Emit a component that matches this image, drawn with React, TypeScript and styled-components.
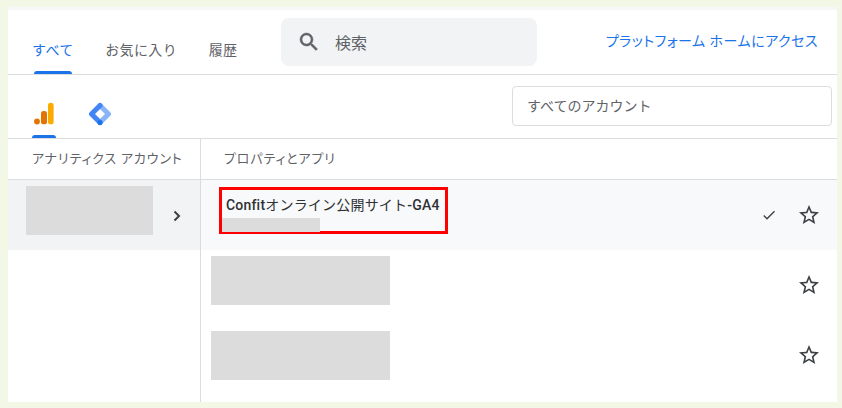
import React from 'react'
import styled, { createGlobalStyle } from 'styled-components'

const GlobalStyle = createGlobalStyle`
  html, body {
    margin: 0;
    padding: 0;
    height: 100%;
    background: #f3f7e5;
  }
  body {
    font-family: Roboto, "Noto Sans CJK JP", sans-serif;
    color: #3c4043;
  }
`

const Page = styled.div`
  width: 842px;
  height: 408px;
  padding: 7px 5px 6px 8px;
  box-sizing: border-box;
  overflow: hidden;
`

const Panel = styled.div`
  height: 395px;
  background: #fff;
  border-top: 3px solid #f7f7f7;
  box-sizing: border-box;
  display: flex;
  flex-direction: column;
`

const TopBar = styled.div`
  height: 64px;
  flex: none;
  display: flex;
  align-items: flex-start;
  border-bottom: 1px solid #dadce0;
  box-sizing: content-box;
`

const Tabs = styled.div`
  display: flex;
  width: 273px;
  padding-left: 24px;
  gap: 31.5px;
  box-sizing: border-box;
  flex: none;
`

const Tab = styled.div<{ $active?: boolean }>`
  position: relative;
  height: 64px;
  padding-top: 30px;
  box-sizing: border-box;
  font-size: 14px;
  line-height: 20px;
  letter-spacing: 0.4px;
  color: ${({ $active }) => ($active ? '#1a73e8' : '#5f6368')};
  ${({ $active }) =>
    $active &&
    `
    &::after {
      content: '';
      position: absolute;
      left: 2px;
      right: 2px;
      bottom: 0;
      height: 3px;
      background: #1a73e8;
      border-radius: 3px 3px 0 0;
    }
  `}
`

const SearchBox = styled.div`
  width: 256px;
  height: 48px;
  margin-top: 8px;
  flex: none;
  border-radius: 8px;
  background: #f1f3f4;
  display: flex;
  align-items: center;
  padding-left: 16px;
  box-sizing: border-box;
  gap: 14px;
  font-size: 16px;
  color: #5f6368;
`

const HomeLink = styled.a`
  margin-left: auto;
  margin-right: 19px;
  margin-top: 21px;
  font-size: 14px;
  line-height: 20px;
  font-feature-settings: "palt";
  letter-spacing: 0.5px;
  color: #1a73e8;
`

const ProductBar = styled.div`
  height: 63px;
  flex: none;
  display: flex;
  align-items: flex-start;
  border-bottom: 1px solid #dadce0;
`

const ProductTab = styled.div<{ $active?: boolean; $width: number }>`
  position: relative;
  width: ${({ $width }) => $width}px;
  height: 63px;
  display: flex;
  padding-top: 27px;
  box-sizing: border-box;
  justify-content: center;
  ${({ $active }) =>
    $active &&
    `
    &::after {
      content: '';
      position: absolute;
      left: 0;
      right: 0;
      bottom: 0;
      height: 3px;
      background: #1a73e8;
      border-radius: 3px 3px 0 0;
    }
  `}
`

const ProductTabs = styled.div`
  display: flex;
  gap: 32px;
  padding-left: 24px;
`

const AccountSelect = styled.div`
  margin: 11px 5px 0 auto;
  width: 320px;
  height: 40px;
  border: 1px solid #dadce0;
  border-radius: 4px;
  box-sizing: border-box;
  padding: 0 0 2px 14px;
  display: flex;
  align-items: center;
  font-size: 14px;
  color: #5f6368;
`

const Columns = styled.div`
  flex: 1;
  display: grid;
  grid-template-columns: 193px 1fr;
  min-height: 0;
`

const Column = styled.div<{ $divider?: boolean }>`
  display: flex;
  flex-direction: column;
  ${({ $divider }) => $divider && 'border-right: 1px solid #dadce0;'}
`

const ColumnHead = styled.div<{ $indent: number }>`
  height: 41px;
  flex: none;
  border-bottom: 1px solid #dadce0;
  padding: 0 0 3px ${({ $indent }) => $indent}px;
  box-sizing: border-box;
  display: flex;
  align-items: center;
  font-size: 13px;
  letter-spacing: 0.85px;
  font-feature-settings: "palt";
  color: #5f6368;
`

const AccountRow = styled.div`
  height: 70px;
  background: #f1f3f4;
  display: flex;
  align-items: flex-start;
  padding: 6px 0 0 18px;
  box-sizing: border-box;
`

const Redacted = styled.div<{ $w: number; $h: number; $top?: number }>`
  width: ${({ $w }) => $w}px;
  height: ${({ $h }) => $h}px;
  margin-top: ${({ $top }) => $top ?? 0}px;
  background: #dcdcdc;
  flex: none;
`

const ChevronSlot = styled.div`
  margin: 22px 0 0 16px;
  display: flex;
`

const PropertyRow = styled.div<{ $selected?: boolean }>`
  height: 70px;
  flex: none;
  display: flex;
  align-items: flex-start;
  padding-left: 10px;
  box-sizing: border-box;
  background: ${({ $selected }) => ($selected ? '#f8f9fa' : '#fff')};
`

const Highlight = styled.div`
  width: 229px;
  height: 47px;
  margin: 7px 0 0 8px;
  border: 3px solid #ff0000;
  box-sizing: border-box;
  flex: none;
`

const PropertyName = styled.div`
  font-size: 14px;
  line-height: 20px;
  margin-left: 4px;
  height: 28px;
  padding-top: 5px;
  box-sizing: border-box;
  font-weight: 500;
  letter-spacing: 0.2px;
  color: #303134;
  white-space: nowrap;
`

const PropertyKana = styled.span`
  font-weight: 400;
`

const RowIcons = styled.div`
  margin-left: auto;
  height: 70px;
  padding-right: 16px;
  display: flex;
  align-items: center;
  gap: 20px;
`

const Check = () => (
  <svg width="16" height="16" viewBox="0 0 24 24" fill="#3c4043">
    <path d="M9 16.2 4.8 12l-1.4 1.4L9 19 21 7l-1.4-1.4z" />
  </svg>
)

const Star = () => (
  <svg width="24" height="24" viewBox="0 0 24 24" fill="#3c4043">
    <path d="M22 9.24l-7.19-.62L12 2 9.19 8.63 2 9.24l5.46 4.73L5.82 21 12 17.27 18.18 21l-1.63-7.03L22 9.24zM12 15.4l-3.76 2.27 1-4.28-3.32-2.88 4.38-.38L12 6.1l1.71 4.04 4.38.38-3.32 2.88 1 4.28L12 15.4z" />
  </svg>
)

const AnalyticsIcon = () => (
  <svg width="22" height="24" viewBox="0 0 22 24">
    <rect x="15" y="0.7" width="5.6" height="21.600" rx="2.600" fill="#f9ab00" />
    <rect x="8" y="9" width="6" height="13.300" rx="2.600" fill="#e37400" />
    <circle cx="4" cy="19.500" r="2.900" fill="#e37400" />
  </svg>
)

const TagManagerIcon = () => (
  <svg width="24" height="24" viewBox="0 0 24 24" fill="none" strokeWidth="5" strokeLinecap="round" strokeLinejoin="round">
    <path d="M12 3.500 20.500 12 12 20.500" stroke="#8ab4f8" />
    <path d="M12 3.500 3.500 12 12 20.500" stroke="#4285f4" />
    <circle cx="12" cy="20.500" r="2.500" fill="#1a73e8" />
  </svg>
)

const SearchIcon = () => (
  <svg width="24" height="24" viewBox="0 0 24 24" fill="#5f6368" stroke="#5f6368" strokeWidth="0.5">
    <path d="M15.5 14h-.79l-.28-.27A6.47 6.47 0 0 0 16 9.5 6.5 6.5 0 1 0 9.5 16c1.61 0 3.09-.59 4.23-1.57l.27.28v.79l5 4.99L20.49 19l-4.99-5zm-6 0C7.01 14 5 11.99 5 9.5S7.01 5 9.5 5 14 7.01 14 9.5 11.99 14 9.5 14z" />
  </svg>
)

const Chevron = () => (
  <svg width="16" height="16" viewBox="0 0 16 16" fill="none" stroke="#3c4043" strokeWidth="2">
    <path d="M5.500 3.500 10 8l-4.500 4.500" />
  </svg>
)

const App = () => (
  <Page>
    <GlobalStyle />
    <Panel>
      <TopBar>
        <Tabs>
          <Tab $active>すべて</Tab>
          <Tab>お気に入り</Tab>
          <Tab>履歴</Tab>
        </Tabs>
        <SearchBox>
          <SearchIcon />
          検索
        </SearchBox>
        <HomeLink>プラットフォーム ホームにアクセス</HomeLink>
      </TopBar>
      <ProductBar>
        <ProductTabs>
          <ProductTab $active $width={24}>
            <AnalyticsIcon />
          </ProductTab>
          <ProductTab $width={24}>
            <TagManagerIcon />
          </ProductTab>
        </ProductTabs>
        <AccountSelect>すべてのアカウント</AccountSelect>
      </ProductBar>
      <Columns>
        <Column $divider>
          <ColumnHead $indent={24}>アナリティクス アカウント</ColumnHead>
          <AccountRow>
            <Redacted $w={127} $h={49} />
            <ChevronSlot>
              <Chevron />
            </ChevronSlot>
          </AccountRow>
        </Column>
        <Column>
          <ColumnHead $indent={23}>プロパティとアプリ</ColumnHead>
          <PropertyRow $selected>
            <Highlight>
              <PropertyName>
                Confit<PropertyKana>オンライン公開サイト</PropertyKana>-GA4
              </PropertyName>
              <Redacted $w={98} $h={14} />
            </Highlight>
            <RowIcons>
              <Check />
              <Star />
            </RowIcons>
          </PropertyRow>
          <PropertyRow>
            <Redacted $w={179} $h={49} $top={6} />
            <RowIcons>
              <Star />
            </RowIcons>
          </PropertyRow>
          <PropertyRow>
            <Redacted $w={179} $h={49} $top={11} />
            <RowIcons>
              <Star />
            </RowIcons>
          </PropertyRow>
        </Column>
      </Columns>
    </Panel>
  </Page>
)

export default App
